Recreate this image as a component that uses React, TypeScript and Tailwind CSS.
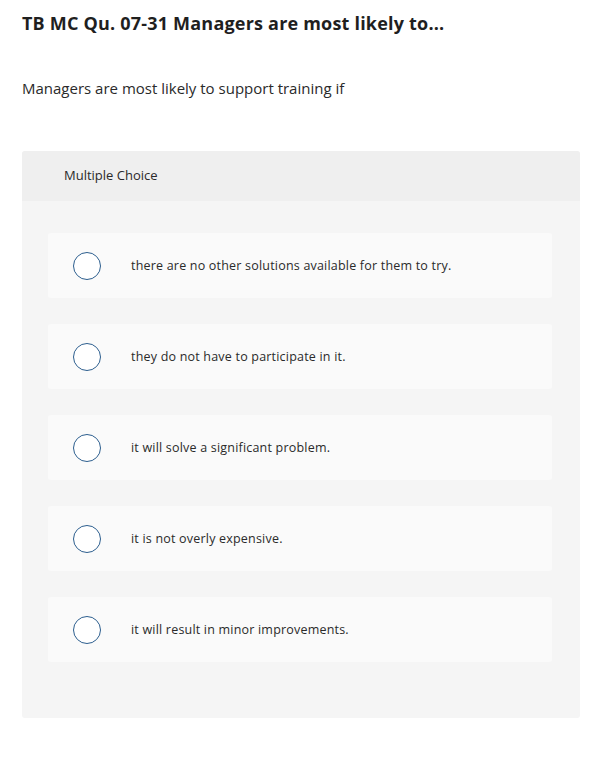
const OPTIONS = [
  "there are no other solutions available for them to try.",
  "they do not have to participate in it.",
  "it will solve a significant problem.",
  "it is not overly expensive.",
  "it will result in minor improvements.",
];

export default function App() {
  return (
    <div className="min-h-[758px] w-[602px] bg-white px-[22px] pt-[11px] text-[#1a1a1a] font-['Open_Sans','Noto_Sans',sans-serif]">
      <h1 className="text-[18px] font-bold leading-[24px] tracking-[0.2px] text-[#1f1f1f]">
        TB MC Qu. 07-31 Managers are most likely to...
      </h1>
      <p className="mt-[42px] text-[15px] leading-[22px] text-[#2a2a2a]">
        Managers are most likely to support training if
      </p>

      <div className="mt-[52px] w-[558px] overflow-hidden rounded-[3px] bg-[#f5f5f5]">
        {/* Header */}
        <div className="flex h-[50px] items-center bg-[#efefef] px-[42px] text-[13px] text-[#2a2a2a]">
          Multiple Choice
        </div>

        {/* Options */}
        <div className="flex flex-col gap-[26px] pl-[26px] pr-[28px] pt-[32px] pb-[56px]">
          {OPTIONS.map((opt) => (
            <label
              key={opt}
              className="flex h-[65px] items-center rounded-[3px] bg-[#fafafa] pl-[25px]"
            >
              <span className="h-[28px] w-[28px] shrink-0 rounded-full border-[1.5px] border-[#2c5e8e] bg-white" />
              <span className="ml-[30px] pt-[2px] text-[12.5px] tracking-[0.2px] text-[#2a2a2a]">{opt}</span>
            </label>
          ))}
        </div>
      </div>
    </div>
  );
}
